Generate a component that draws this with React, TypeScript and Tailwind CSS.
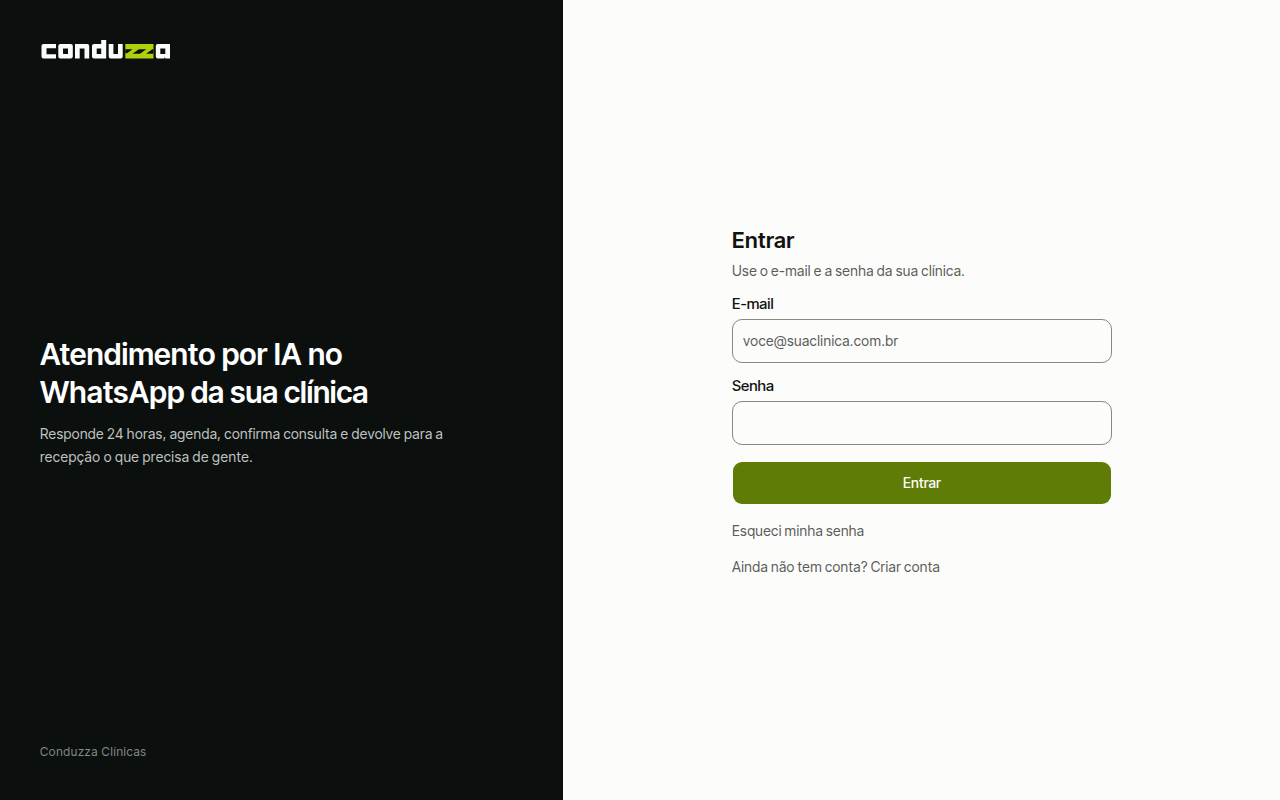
import type { ReactNode } from 'react';

const Logo = () => (
  <svg width="130" height="20" viewBox="0 0 130 20" role="img" aria-label="conduzza">
    <g fill="#fbfcf9" fillRule="evenodd">
      <path d="M3.500 4H16v4.200H6.500v6H16v4.300H3.500a2 2 0 0 1-2-2V6a2 2 0 0 1 2-2z" />
      <path d="M20.300 4h10.500a2 2 0 0 1 2 2v10.500a2 2 0 0 1-2 2H20.300a2 2 0 0 1-2-2V6a2 2 0 0 1 2-2zM23 8.500v5.500h5v-5.500z" />
      <path d="M35 4H47.200a2 2 0 0 1 2 2v12.500h-4.700V8.500h-4.800v10H35z" />
      <path d="M61.200 0h5v18.500H54a2 2 0 0 1-2-2V6a2 2 0 0 1 2-2h7.200zM56.700 8.500v5.500h4.500v-5.500z" />
      <path d="M68.700 4h4.700v10H78V4h4.700v12.500a2 2 0 0 1-2 2h-10a2 2 0 0 1-2-2z" />
      <path d="M117.800 4H130v14.500h-4.500l-.7-1.300-.7 1.300h-6.300a2 2 0 0 1-2-2V6a2 2 0 0 1 2-2zM120.300 8.500v5.500h5v-5.500z" />
    </g>
    <path fill="#b0d10a" d="M85.300 4h28.200v14.500H85.300z" />
    <g fill="#0b100e">
      <path d="M85.300 9.200h7.200l-5.500 4h-1.700z" />
      <path d="M98.800 9.200h7.500l-6.300 4.600h-7.500z" />
      <path d="M113.500 9.200v4.600H106l6.300-4.600z" />
    </g>
  </svg>
);

interface FieldProps {
  id: string;
  label: string;
  type: string;
  placeholder?: string;
}

const Field = ({ id, label, type, placeholder }: FieldProps) => (
  <div className="flex flex-col gap-1">
    <label htmlFor={id} className="text-[15px] leading-[22px] font-medium text-[#111111]">
      {label}
    </label>
    <input
      id={id}
      type={type}
      placeholder={placeholder}
      className="h-11 w-full rounded-[10px] border border-[#858885] bg-transparent px-2.5 text-[14px] tracking-[0.44px] text-[#111111] outline-none placeholder:text-[#5a5c5a]"
    />
  </div>
);

const FormLink = ({ children }: { children: ReactNode }) => (
  <a href="#" className="block text-[14px] leading-5 tracking-[0.38px] [word-spacing:-0.75px] text-[#5a5c5a]">
    {children}
  </a>
);

export default function App() {
  return (
    <div className="grid h-screen grid-cols-[563px_1fr] bg-[#fcfcfa] font-['Inter_Tight','Inter',sans-serif]">
      <aside className="flex flex-col justify-between bg-[#0b100e] p-10">
        <Logo />
        <div className="max-w-[420px]">
          <h2 className="text-[30px] leading-[38px] font-semibold text-white">
            <span className="block tracking-[0.06px]">Atendimento por IA no</span>
            <span className="block tracking-[-0.25px]">
              <span className="tracking-[0.1px]">WhatsApp</span> da sua clínica
            </span>
          </h2>
          <p className="mt-[11px] mb-px text-[14px] leading-[23px] [word-spacing:-0.6px] text-[#c0c4c1]">
            <span className="block tracking-[0.4px]">
              Responde 24 horas, agenda, confirma consulta e devolve para a
            </span>
            <span className="block tracking-[0.5px]">recepção o que precisa de gente.</span>
          </p>
        </div>
        <p className="text-xs leading-4 tracking-[0.7px] text-[#858a87]">Conduzza Clínicas</p>
      </aside>

      <main className="flex items-center justify-center pl-px">
        <div className="w-[380px] pt-0.5">
          <h1 className="text-[22px] leading-7 font-semibold tracking-[0.4px] text-[#111111]">Entrar</h1>
          <p className="mt-1.5 text-[14px] leading-[22px] tracking-[0.4px] [word-spacing:-0.7px] text-[#5a5c5a]">
            Use o e-mail e a senha da sua clínica.
          </p>
          <form className="mt-[11px] flex flex-col" onSubmit={(e) => e.preventDefault()}>
            <Field id="email" label="E-mail" type="email" placeholder="voce@suaclinica.com.br" />
            <div className="mt-3">
              <Field id="senha" label="Senha" type="password" />
            </div>
            <button
              type="submit"
              className="mt-4 h-11 rounded-[10px] border border-transparent bg-[#5f7c06] bg-clip-padding text-[14px] font-medium tracking-[0.15px] text-white"
            >
              Entrar
            </button>
          </form>
          <div className="mt-4 flex flex-col gap-4">
            <FormLink>Esqueci minha senha</FormLink>
            <FormLink>Ainda não tem conta? Criar conta</FormLink>
          </div>
        </div>
      </main>
    </div>
  );
}
